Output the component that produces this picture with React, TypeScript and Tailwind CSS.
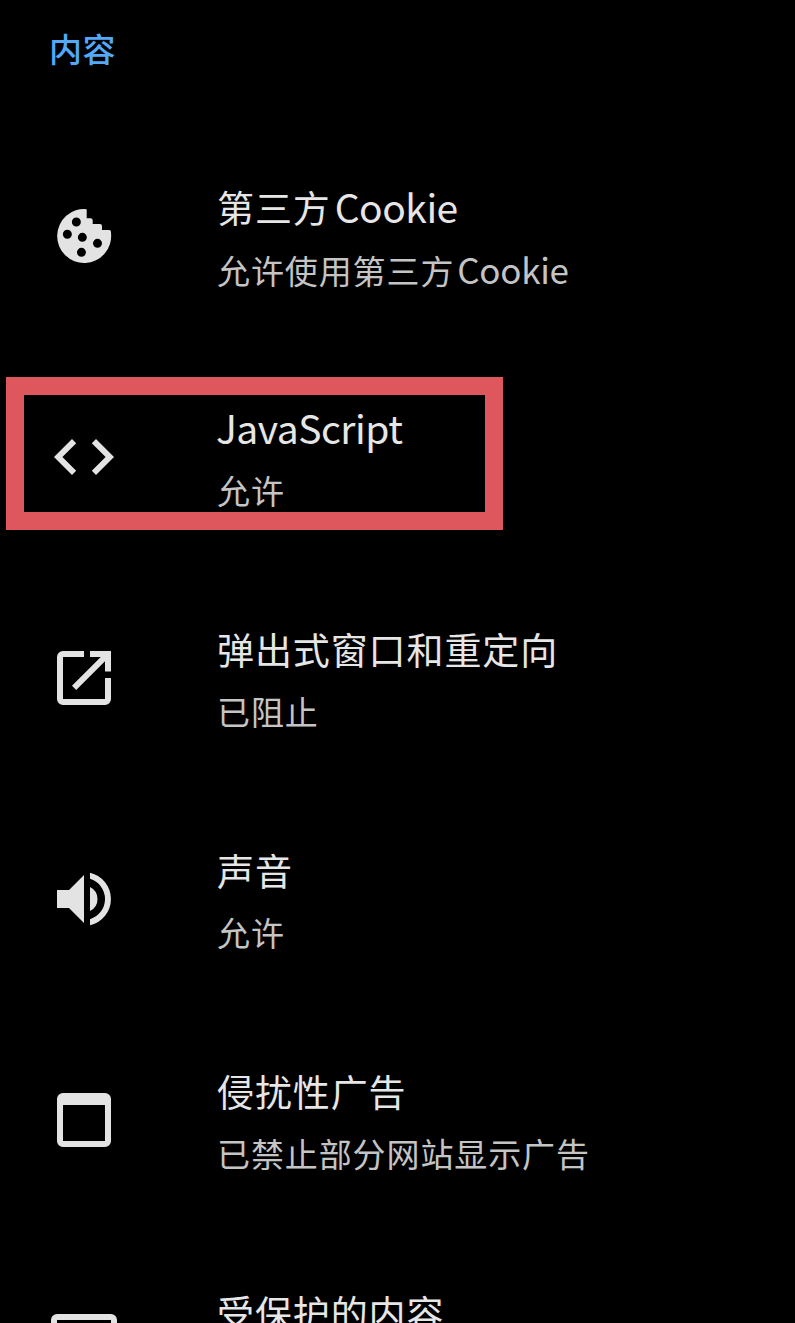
import type { ReactNode } from "react";

type Setting = {
  id: string;
  title: ReactNode;
  subtitle?: ReactNode;
  icon: ReactNode;
  latinTitle?: boolean;
};

function TitleLatin({ children }: { children: string }) {
  return <span className="text-[39px] tracking-[-0.5px]">{children}</span>;
}

function SubtitleLatin({ children }: { children: string }) {
  return <span className="ml-[3px] text-[35px] tracking-[-0.3px]">{children}</span>;
}

function CookieIcon() {
  return (
    <path
      fillRule="evenodd"
      d="M12.9 3.05A9 9 0 1 0 21 11V10.7Q21 10 20.4 10H18V8.7Q18 8 17.3 8H14.9V6.8Q14.9 6.1 14.2 6.1H12.9ZM9.45 5.85a1.5 1.5 0 1 1 0 3a1.5 1.5 0 1 1 0-3ZM6.45 9.9a1.5 1.5 0 1 1 0 3a1.5 1.5 0 1 1 0-3ZM11.45 10.95a1.5 1.5 0 1 1 0 3a1.5 1.5 0 1 1 0-3ZM16.5 12.95a1.5 1.5 0 1 1 0 3a1.5 1.5 0 1 1 0-3ZM11.15 15.95a1.5 1.5 0 1 1 0 3a1.5 1.5 0 1 1 0-3Z"
    />
  );
}

function CodeIcon() {
  return (
    <path d="M9.4 16.6 4.8 12l4.6-4.6L8 6l-6 6 6 6 1.4-1.4zm5.2 0 4.6-4.6-4.6-4.6L16 6l6 6-6 6-1.4-1.4z" />
  );
}

function PopupIcon() {
  return (
    <path d="M12 3H5a2 2 0 0 0-2 2v14a2 2 0 0 0 2 2h14a2 2 0 0 0 2-2v-7h-2v7H5V5h7ZM14 3v2h3.59L8 14.6 9.4 16 19 6.41V9.8h2V3Z" />
  );
}

function SoundIcon() {
  return (
    <path d="M3 9v6h4l5 5V4L7 9H3zm13.5 3A4.5 4.5 0 0 0 14 7.97v8.05A4.5 4.5 0 0 0 16.5 12zM14 3.23v2.06a7 7 0 0 1 0 13.42v2.06a9 9 0 0 0 0-17.54z" />
  );
}

function WindowIcon() {
  return (
    <path
      fillRule="evenodd"
      d="M5 3h14a2 2 0 0 1 2 2v14a2 2 0 0 1-2 2H5a2 2 0 0 1-2-2V5a2 2 0 0 1 2-2ZM5 7v12h14V7Z"
    />
  );
}

function ScreenIcon() {
  return (
    <path
      fillRule="evenodd"
      d="M3 3h18a2 2 0 0 1 2 2v12a2 2 0 0 1-2 2h-5v2H8v-2H3a2 2 0 0 1-2-2V5a2 2 0 0 1 2-2ZM3 5v12h18V5Z"
    />
  );
}

const settings: Setting[] = [
  {
    id: "cookie",
    latinTitle: true,
    title: (
      <>
        第三方
        <span className="ml-[4px]">
          <TitleLatin>Cookie</TitleLatin>
        </span>
      </>
    ),
    subtitle: (
      <>
        允许使用第三方<SubtitleLatin>Cookie</SubtitleLatin>
      </>
    ),
    icon: <CookieIcon />,
  },
  {
    id: "javascript",
    latinTitle: true,
    title: (
      <span className="-ml-px">
        <TitleLatin>JavaScript</TitleLatin>
      </span>
    ),
    subtitle: "允许",
    icon: <CodeIcon />,
  },
  { id: "popup", title: "弹出式窗口和重定向", subtitle: "已阻止", icon: <PopupIcon /> },
  { id: "sound", title: "声音", subtitle: "允许", icon: <SoundIcon /> },
  { id: "ads", title: "侵扰性广告", subtitle: "已禁止部分网站显示广告", icon: <WindowIcon /> },
  { id: "protected", title: "受保护的内容", icon: <ScreenIcon /> },
];

function SettingRow({ setting }: { setting: Setting }) {
  return (
    <li className="flex h-[221px] items-start pl-12">
      <svg viewBox="0 0 24 24" className="mt-[74px] size-[72px] shrink-0 fill-[#e3e3e3]">
        {setting.icon}
      </svg>
      <div className="ml-[97px] flex flex-col pt-[53px] whitespace-nowrap">
        <div
          className={`h-[62px] text-[37px] tracking-[0.9px] text-[#e6e6e6] ${
            setting.latinTitle ? "leading-[54px]" : "leading-[56px]"
          }`}
        >
          {setting.title}
        </div>
        <div className="h-[56px] text-[33px] leading-[56px] tracking-[0.9px] text-[#c4c4c4]">
          {setting.subtitle}
        </div>
      </div>
    </li>
  );
}

export default function App() {
  return (
    <main className="relative h-[1323px] w-full overflow-hidden bg-black font-['Noto_Sans_CJK_SC',sans-serif]">
      <h2 className="h-[126px] pt-[20px] pl-[49px] text-[33px] leading-[56px] font-medium tracking-[0.5px] text-[#53a8fa]">
        内容
      </h2>
      <ul>
        {settings.map((s) => (
          <SettingRow key={s.id} setting={s} />
        ))}
      </ul>
      <div className="pointer-events-none absolute top-[377px] left-[6px] h-[153px] w-[497px] border-[18px] border-[#dd575c]" />
    </main>
  );
}
